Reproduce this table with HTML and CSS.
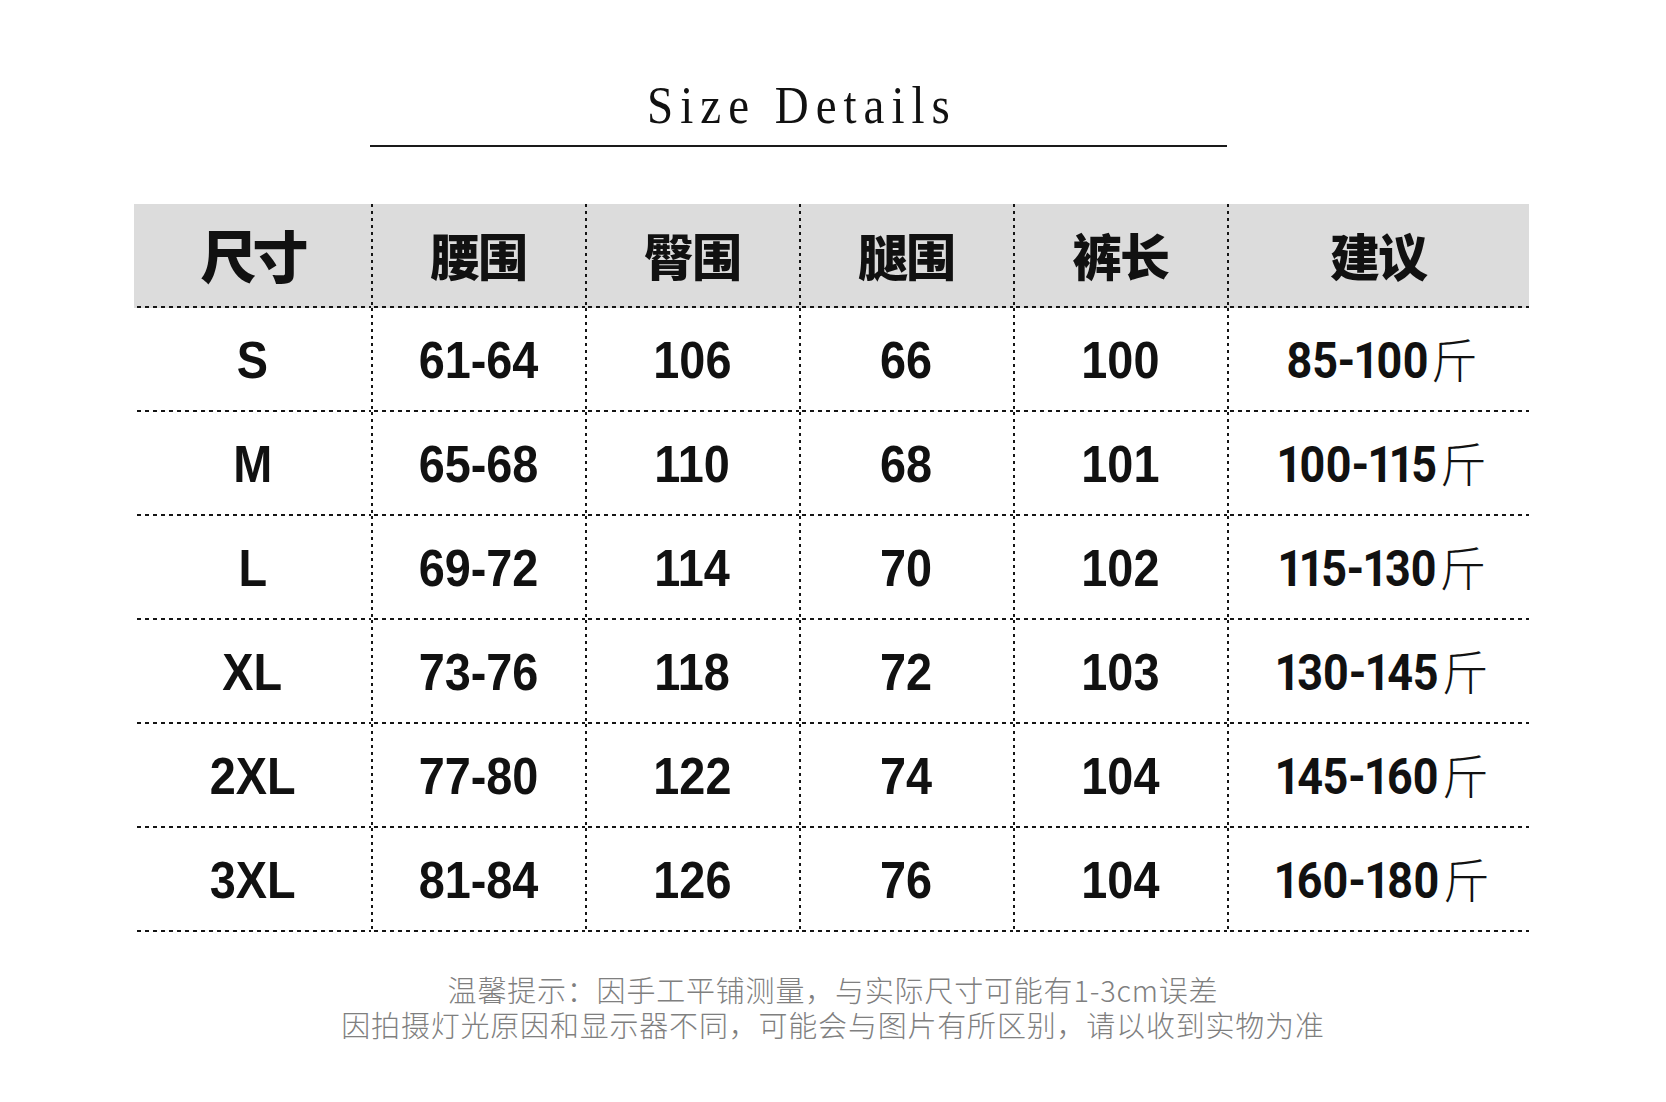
FILE: index.html
```html
<!DOCTYPE html>
<html lang="zh-CN">
<head>
<meta charset="utf-8">
<title>Size Details</title>
<link rel="stylesheet" href="styles.css">
</head>
<body>
<div class="page">
  <div class="title-wrap">
    <h1 class="title"><span class="title-text">Size Details</span></h1>
  </div>

  <div class="table">
    <div class="cell head first"><span class="hd big">尺寸</span></div>
    <div class="cell head"><span class="hd">腰围</span></div>
    <div class="cell head"><span class="hd">臀围</span></div>
    <div class="cell head"><span class="hd">腿围</span></div>
    <div class="cell head"><span class="hd">裤长</span></div>
    <div class="cell head"><span class="hd">建议</span></div>

    <div class="cell first"><span class="num">S</span></div>
    <div class="cell"><span class="num">61-64</span></div>
    <div class="cell"><span class="num">106</span></div>
    <div class="cell"><span class="num">66</span></div>
    <div class="cell"><span class="num">100</span></div>
    <div class="cell"><span class="wt"><span class="wt-n">85-100</span><span class="jin">斤</span></span></div>

    <div class="cell first"><span class="num">M</span></div>
    <div class="cell"><span class="num">65-68</span></div>
    <div class="cell"><span class="num">110</span></div>
    <div class="cell"><span class="num">68</span></div>
    <div class="cell"><span class="num">101</span></div>
    <div class="cell"><span class="wt"><span class="wt-n">100-115</span><span class="jin">斤</span></span></div>

    <div class="cell first"><span class="num">L</span></div>
    <div class="cell"><span class="num">69-72</span></div>
    <div class="cell"><span class="num">114</span></div>
    <div class="cell"><span class="num">70</span></div>
    <div class="cell"><span class="num">102</span></div>
    <div class="cell"><span class="wt"><span class="wt-n">115-130</span><span class="jin">斤</span></span></div>

    <div class="cell first"><span class="num">XL</span></div>
    <div class="cell"><span class="num">73-76</span></div>
    <div class="cell"><span class="num">118</span></div>
    <div class="cell"><span class="num">72</span></div>
    <div class="cell"><span class="num">103</span></div>
    <div class="cell"><span class="wt"><span class="wt-n">130-145</span><span class="jin">斤</span></span></div>

    <div class="cell first"><span class="num">2XL</span></div>
    <div class="cell"><span class="num">77-80</span></div>
    <div class="cell"><span class="num">122</span></div>
    <div class="cell"><span class="num">74</span></div>
    <div class="cell"><span class="num">104</span></div>
    <div class="cell"><span class="wt"><span class="wt-n">145-160</span><span class="jin">斤</span></span></div>

    <div class="cell first"><span class="num">3XL</span></div>
    <div class="cell"><span class="num">81-84</span></div>
    <div class="cell"><span class="num">126</span></div>
    <div class="cell"><span class="num">76</span></div>
    <div class="cell"><span class="num">104</span></div>
    <div class="cell"><span class="wt"><span class="wt-n">160-180</span><span class="jin">斤</span></span></div>
  </div>

  <div class="note">
    <p class="note-line">温馨提示：因手工平铺测量，与实际尺寸可能有1-3cm误差</p>
    <p class="note-line">因拍摄灯光原因和显示器不同，可能会与图片有所区别，请以收到实物为准</p>
  </div>
</div>
</body>
</html>
```

FILE: styles.css
```css
html, body {
  margin: 0;
  padding: 0;
  background: #ffffff;
}

.page {
  width: 1666px;
  height: 1102px;
  padding-top: 80px;
  box-sizing: border-box;
  overflow: hidden;
}

.title-wrap {
  margin-left: 370px;
  width: 857px;
  padding-bottom: 15px;
  border-bottom: 2px solid #1a1a1a;
}

.title {
  margin: 0;
  height: 50px;
  line-height: 50px;
  text-align: center;
  font-family: "Liberation Serif", "Times New Roman", serif;
  font-size: 47px;
  font-weight: 400;
  color: #111111;
}

.title-text {
  display: inline-block;
  letter-spacing: 7px;
  margin-right: -7px;
  transform: scaleY(1.14);
}

.table {
  margin-top: 57px;
  margin-left: 134px;
  width: 1395px;
  display: grid;
  grid-template-columns: 237px 214px 214px 214px 214px 302px;
  grid-auto-rows: 104px;
}

.cell {
  display: flex;
  align-items: center;
  justify-content: center;
  background-image:
    repeating-linear-gradient(to right, #151515 0 4px, transparent 4px 8px),
    repeating-linear-gradient(to bottom, #151515 0 3px, transparent 3px 7px);
  background-size: 100% 2px, 2px 100%;
  background-position: left 3px bottom 0, left 0 top 0;
  background-repeat: no-repeat, no-repeat;
}

.cell.first {
  background-image:
    repeating-linear-gradient(to right, #151515 0 4px, transparent 4px 8px);
  background-size: 100% 2px;
  background-position: left 3px bottom 0;
  background-repeat: no-repeat;
}

.cell.head {
  background-color: #dcdcdc;
}

.hd {
  font-family: "Noto Sans CJK SC", "Noto Sans CJK JP", sans-serif;
  font-weight: 900;
  font-size: 50px;
  line-height: 1;
  color: #111111;
  letter-spacing: -2px;
  margin-top: -4px;
}

.hd.big {
  font-size: 56px;
  letter-spacing: -4px;
}

.num {
  display: inline-block;
  font-family: "Liberation Sans", Arial, sans-serif;
  font-weight: 700;
  font-size: 52px;
  line-height: 1;
  color: #111111;
  transform: scaleX(0.9);
}

.wt {
  display: inline-flex;
  align-items: baseline;
  line-height: 1;
  color: #111111;
}

.wt-n {
  display: inline-block;
  font-family: Roboto, "Liberation Sans", sans-serif;
  font-weight: 700;
  font-size: 50px;
  font-variant-numeric: proportional-nums;
  font-feature-settings: "pnum" 1;
  letter-spacing: -0.5px;
  transform: scaleX(0.9);
  margin-right: -6px;
}

.jin {
  font-family: "Noto Sans CJK SC", "Noto Sans CJK JP", sans-serif;
  font-weight: 300;
  font-size: 47px;
}

.note {
  margin-top: 40px;
  text-align: center;
}

.note-line {
  margin: 0;
  font-family: "Noto Sans CJK SC", "Noto Sans CJK JP", sans-serif;
  font-weight: 300;
  font-size: 29px;
  line-height: 35px;
  letter-spacing: 0.8px;
  color: #7f7f7f;
}
```
